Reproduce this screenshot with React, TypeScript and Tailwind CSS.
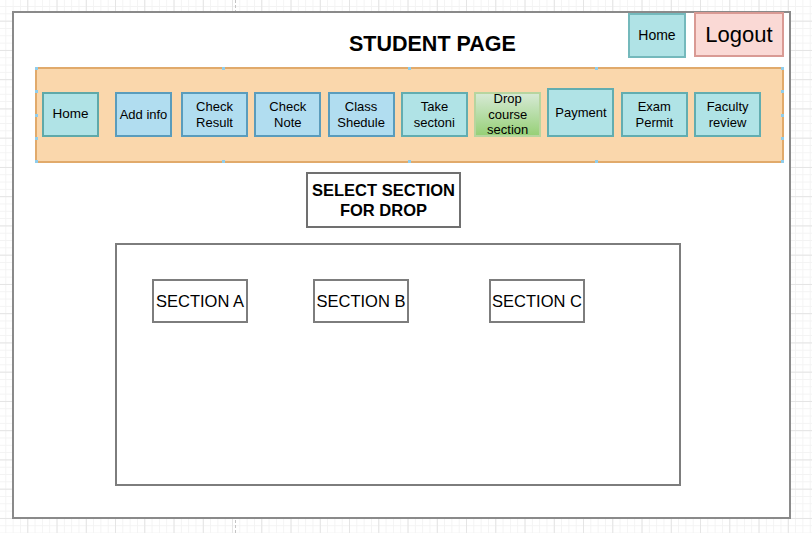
const font = "font-['Liberation_Sans',Arial,sans-serif]";

type Tone = 'teal' | 'blue' | 'green';

const tones: Record<Tone, string> = {
  teal: 'bg-[#b0e3e6] border-[#62adb0]',
  blue: 'bg-[#b1ddf0] border-[#5a9cbc]',
  green: 'bg-linear-to-b from-[#d6e9d4] to-[#97d077] border-[#b7d59f]',
};

const menu: { label: string; tone: Tone; w: string; h?: string }[] = [
  { label: 'Check Result', tone: 'blue', w: 'w-[67px]' },
  { label: 'Check Note', tone: 'blue', w: 'w-[67px]' },
  { label: 'Class Shedule', tone: 'blue', w: 'w-[67px]' },
  { label: 'Take sectoni', tone: 'teal', w: 'w-[67px]' },
  { label: 'Drop course section', tone: 'green', w: 'w-[67px]' },
  { label: 'Payment', tone: 'teal', w: 'w-[67px]', h: 'h-[49px]' },
  { label: 'Exam Permit', tone: 'teal', w: 'w-[67px]' },
  { label: 'Faculty review', tone: 'teal', w: 'w-[67px]' },
];

function MenuBox({ label, tone, w, h }: { label: string; tone: Tone; w: string; h?: string }) {
  return (
    <div
      className={`${w} ${h ?? 'h-[45px]'} ${tones[tone]} border-2 shrink-0 flex items-center justify-center text-center text-[13px] leading-[15.5px] text-black`}
    >
      {label}
    </div>
  );
}

// little draw.io selection handles along one edge
function Handles({ n, className }: { n: number; className: string }) {
  return (
    <div className={`absolute flex justify-between ${className}`}>
      {Array.from({ length: n }).map((_, i) => (
        <span key={i} className="w-[3px] h-[3px] bg-[#8fcdec]" />
      ))}
    </div>
  );
}

function SectionBox({ label }: { label: string }) {
  return (
    <div className="w-[96px] h-[44px] border-2 border-[#7d7d7d] flex items-center justify-center text-[16.5px] text-black whitespace-nowrap">
      {label}
    </div>
  );
}

export default function App() {
  return (
    <div
      className={`${font} relative w-[812px] h-[533px] overflow-hidden bg-white bg-[linear-gradient(to_right,#e4e4e4_1px,transparent_1px),linear-gradient(to_bottom,#e4e4e4_1px,transparent_1px),linear-gradient(to_right,#f3f3f3_1px,transparent_1px),linear-gradient(to_bottom,#f3f3f3_1px,transparent_1px)] bg-[size:29.25px_29.25px,29.25px_29.25px,7.3125px_7.3125px,7.3125px_7.3125px] bg-[position:27.3px_20.7px] pl-[12px] pt-[11px]`}
    >
      {/* page break line */}
      <div className="absolute left-[235px] top-0 h-full border-l border-dashed border-[#c4c4c4]" />

      <div className="relative w-[779px] h-[508px] border-2 border-[#8a8a8a] bg-white">
        {/* header */}
        <div className="flex items-start h-[54px]">
          <div className="flex-1 pl-[335px] pt-[18px]">
            <h1 className="text-[21.5px] font-bold leading-[26px] text-black">STUDENT PAGE</h1>
          </div>
          <div className="w-[58px] h-[45px] bg-[#b0e3e6] border-2 border-[#74b9bc] flex items-center justify-center text-[14px] text-black">
            Home
          </div>
          <div className="ml-[8px] mr-[5px] -mt-px w-[90px] h-[45px] bg-[#fad9d5] border-2 border-[#d99a94] flex items-center justify-center text-[22px] text-black">
            Logout
          </div>
        </div>

        {/* nav band */}
        <div className="relative ml-[21px] w-[749px] h-[96px] bg-[#fad7ac] border-2 border-[#e1aa6b] flex items-end pb-[24px] pl-[5px]">
          <div className="w-[57px] h-[45px] bg-[#b0e3e6] border-2 border-[#5fa9a9] flex items-center justify-center text-[13.5px] text-black shrink-0">
            Home
          </div>
          <MenuBoxWrap />

          <Handles n={5} className="-left-[2px] -right-[2px] -top-[2px]" />
          <Handles n={5} className="-left-[2px] -right-[2px] -bottom-[2px]" />
          <Handles n={5} className="-left-[2px] -top-[2px] -bottom-[2px] flex-col w-[3px]" />
          <Handles n={5} className="-right-[2px] -top-[2px] -bottom-[2px] flex-col w-[3px]" />
        </div>

        {/* select heading */}
        <div className="ml-[292px] mt-[9px] w-[155px] h-[56px] border-2 border-[#707070] flex items-center justify-center text-center text-[16.5px] leading-[20px] font-bold text-black">
          SELECT SECTION
          <br />
          FOR DROP
        </div>

        {/* sections */}
        <div className="ml-[101px] mt-[15px] w-[566px] h-[243px] border-2 border-[#7d7d7d] flex items-start gap-[65px] pt-[34px] pl-[35px]">
          <SectionBox label="SECTION A" />
          <SectionBox label="SECTION B" />
          <div className="ml-[15px]">
            <SectionBox label="SECTION C" />
          </div>
        </div>
      </div>
    </div>
  );
}

function MenuBoxWrap() {
  return (
    <div className="flex items-end ml-[16px]">
      <div className="w-[57px] h-[45px] bg-[#b1ddf0] border-2 border-[#5a9cbc] flex items-center justify-center text-[13px] text-black whitespace-nowrap shrink-0">
        Add info
      </div>
      <div className="flex items-end gap-[6.3px] ml-[9px]">
        {menu.map((m) => (
          <MenuBox key={m.label} {...m} />
        ))}
      </div>
    </div>
  );
}
